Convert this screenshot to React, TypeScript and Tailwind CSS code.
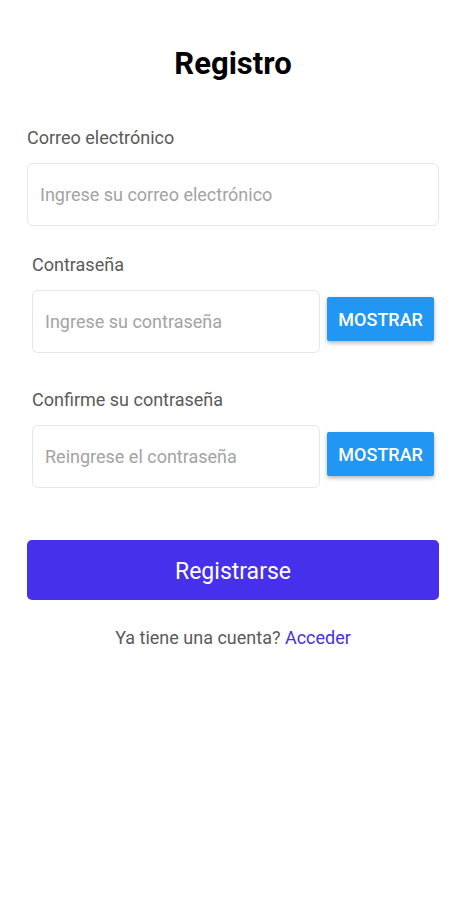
import { useState } from 'react';

function PasswordField({
  label,
  placeholder,
  className,
}: {
  label: string;
  placeholder: string;
  className?: string;
}) {
  const [show, setShow] = useState(false);
  return (
    <div className={className}>
      <label className="block text-[18px] leading-6 text-[#5a5a5a]">{label}</label>
      <div className="mt-[13px] flex items-start gap-[7px]">
        <input
          type={show ? 'text' : 'password'}
          placeholder={placeholder}
          className="h-[63px] w-[289px] rounded-[6px] border border-[#e6e6e6] bg-white px-[12px] text-[18px] text-[#333] outline-none placeholder:text-[#a3a3a3]"
        />
        <button
          type="button"
          onClick={() => setShow(!show)}
          className="mt-[7px] h-[44px] w-[107px] rounded-[2px] bg-[#2196f3] text-[18px] font-medium text-white shadow-[0_2px_4px_rgba(0,0,0,0.3)]"
        >
          MOSTRAR
        </button>
      </div>
    </div>
  );
}

export default function App() {
  return (
    <div className="min-h-[900px] w-full bg-white px-[27px] pt-[46px] font-['Roboto',sans-serif]">
      {/* Title */}
      <h1 className="text-center text-[31px] font-bold leading-9 text-black">Registro</h1>

      {/* Email */}
      <div className="mt-[44px]">
        <label className="block text-[18px] leading-6 text-[#5a5a5a]">Correo electrónico</label>
        <input
          type="email"
          placeholder="Ingrese su correo electrónico"
          className="mt-[13px] h-[63px] w-full rounded-[6px] border border-[#e6e6e6] bg-white px-[12px] text-[18px] text-[#333] outline-none placeholder:text-[#a3a3a3]"
        />
      </div>

      {/* Passwords */}
      <div className="px-[5px]">
        <PasswordField className="mt-[27px]" label="Contraseña" placeholder="Ingrese su contraseña" />
        <PasswordField
          className="mt-[35px]"
          label="Confirme su contraseña"
          placeholder="Reingrese el contraseña"
        />
      </div>

      <button
        type="button"
        className="mt-[52px] h-[60px] w-full rounded-[5px] bg-[#4630eb] pt-[4px] text-[23px] text-white"
      >
        Registrarse
      </button>

      <p className="mt-[26px] text-center text-[18px] leading-6 text-[#5a5a5a]">
        Ya tiene una cuenta? <span className="text-[#4630eb]">Acceder</span>
      </p>
    </div>
  );
}
